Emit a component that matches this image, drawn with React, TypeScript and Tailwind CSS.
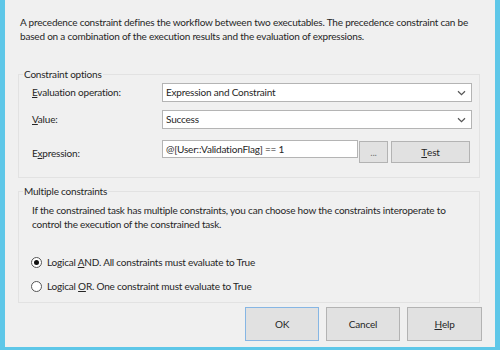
import React from 'react';

const font = { fontFamily: 'Lato, "Noto Sans", sans-serif' };

const Chevron = () => (
  <svg width="9" height="6" viewBox="0 0 9 6" className="text-[#555]">
    <path d="M1 1.2 L4.5 4.6 L8 1.2" fill="none" stroke="currentColor" strokeWidth="1.2" />
  </svg>
);

const Select: React.FC<{ value: string }> = ({ value }) => (
  <div className="w-[310px] h-[19px] bg-white border border-[#b4b4b4] flex items-center justify-between pl-[3px] pr-[5px]">
    <span>{value}</span>
    <Chevron />
  </div>
);

const GroupBox: React.FC<{ title: string; className?: string; children: React.ReactNode }> = ({ title, className, children }) => (
  <div className={`relative ml-[13px] w-[462px] border border-[#e2e2e2] ${className ?? ''}`}>
    <span className="absolute left-[4px] top-[-9px] px-[1px] bg-[#f0f0f0] leading-[16px]">{title}</span>
    {children}
  </div>
);

const Radio: React.FC<{ checked?: boolean; children: React.ReactNode }> = ({ checked, children }) => (
  <div className="flex items-center h-[16px] pl-[12px]">
    <span className="w-[11px] h-[11px] rounded-full bg-white border border-[#555] flex items-center justify-center">
      {checked && <span className="w-[5px] h-[5px] rounded-full bg-[#111]" />}
    </span>
    <span className="ml-[5px]">{children}</span>
  </div>
);

const Btn: React.FC<{ children: React.ReactNode; primary?: boolean; className?: string }> = ({ children, primary, className }) => (
  <div
    className={`flex items-center justify-center bg-[#e1e1e1] border ${primary ? 'border-[#86b6e4]' : 'border-[#b3b3b3]'} ${className ?? ''}`}
  >
    {children}
  </div>
);

export default function App() {
  return (
    <div className="w-[500px] h-[350px] bg-[#5ec7e8] px-[5px] pb-[3px]" style={font}>
      <div className="h-full bg-[#f0f0f0] text-[10px] tracking-[-0.2px] text-[#262626] flex flex-col whitespace-nowrap">
        <p className="pt-[15px] pl-[15px] leading-[14px]">
          A precedence constraint defines the workflow between two executables. The precedence constraint can be
          <br />
          based on a combination of the execution results and the evaluation of expressions.
        </p>

        <GroupBox title="Constraint options" className="mt-[31px] h-[104px]">
          <div className="pt-[8px] pl-[13px] flex flex-col">
            <div className="flex items-center h-[19px]">
              <span className="w-[130px]">
                <u>E</u>valuation operation:
              </span>
              <Select value="Expression and Constraint" />
            </div>
            <div className="flex items-center h-[19px] mt-[8px]">
              <span className="w-[130px]">
                <u>V</u>alue:
              </span>
              <Select value="Success" />
            </div>
            <div className="flex items-start mt-[11px]">
              <span className="w-[130px] mt-[6px]">
                E<u>x</u>pression:
              </span>
              <div className="w-[196px] h-[18px] bg-white border border-[#b4b4b4] flex items-center pl-[3px]">
                @[User::ValidationFlag] == 1
              </div>
              <Btn className="ml-[1px] mt-[1px] w-[29px] h-[22px] text-[#777]">...</Btn>
              <Btn className="ml-[3px] mt-[1px] w-[79px] h-[22px]">
                <u>T</u>est
              </Btn>
            </div>
          </div>
        </GroupBox>

        <GroupBox title="Multiple constraints" className="mt-[13px] h-[112px]">
          <p className="pt-[11px] pl-[13px] leading-[14px]">
            If the constrained task has multiple constraints, you can choose how the constraints interoperate to
            <br />
            control the execution of the constrained task.
          </p>
          <div className="mt-[23px] flex flex-col gap-[8px]">
            <Radio checked>
              Logical <u>A</u>ND. All constraints must evaluate to True
            </Radio>
            <Radio>
              Logical <u>O</u>R. One constraint must evaluate to True
            </Radio>
          </div>
        </GroupBox>

        <div className="flex justify-end gap-[7px] mt-[4px] pr-[13px]">
          <Btn primary className="w-[74px] h-[34px]">OK</Btn>
          <Btn className="w-[74px] h-[34px]">Cancel</Btn>
          <Btn className="w-[75px] h-[34px]">
            <u>H</u>elp
          </Btn>
        </div>
      </div>
    </div>
  );
}
